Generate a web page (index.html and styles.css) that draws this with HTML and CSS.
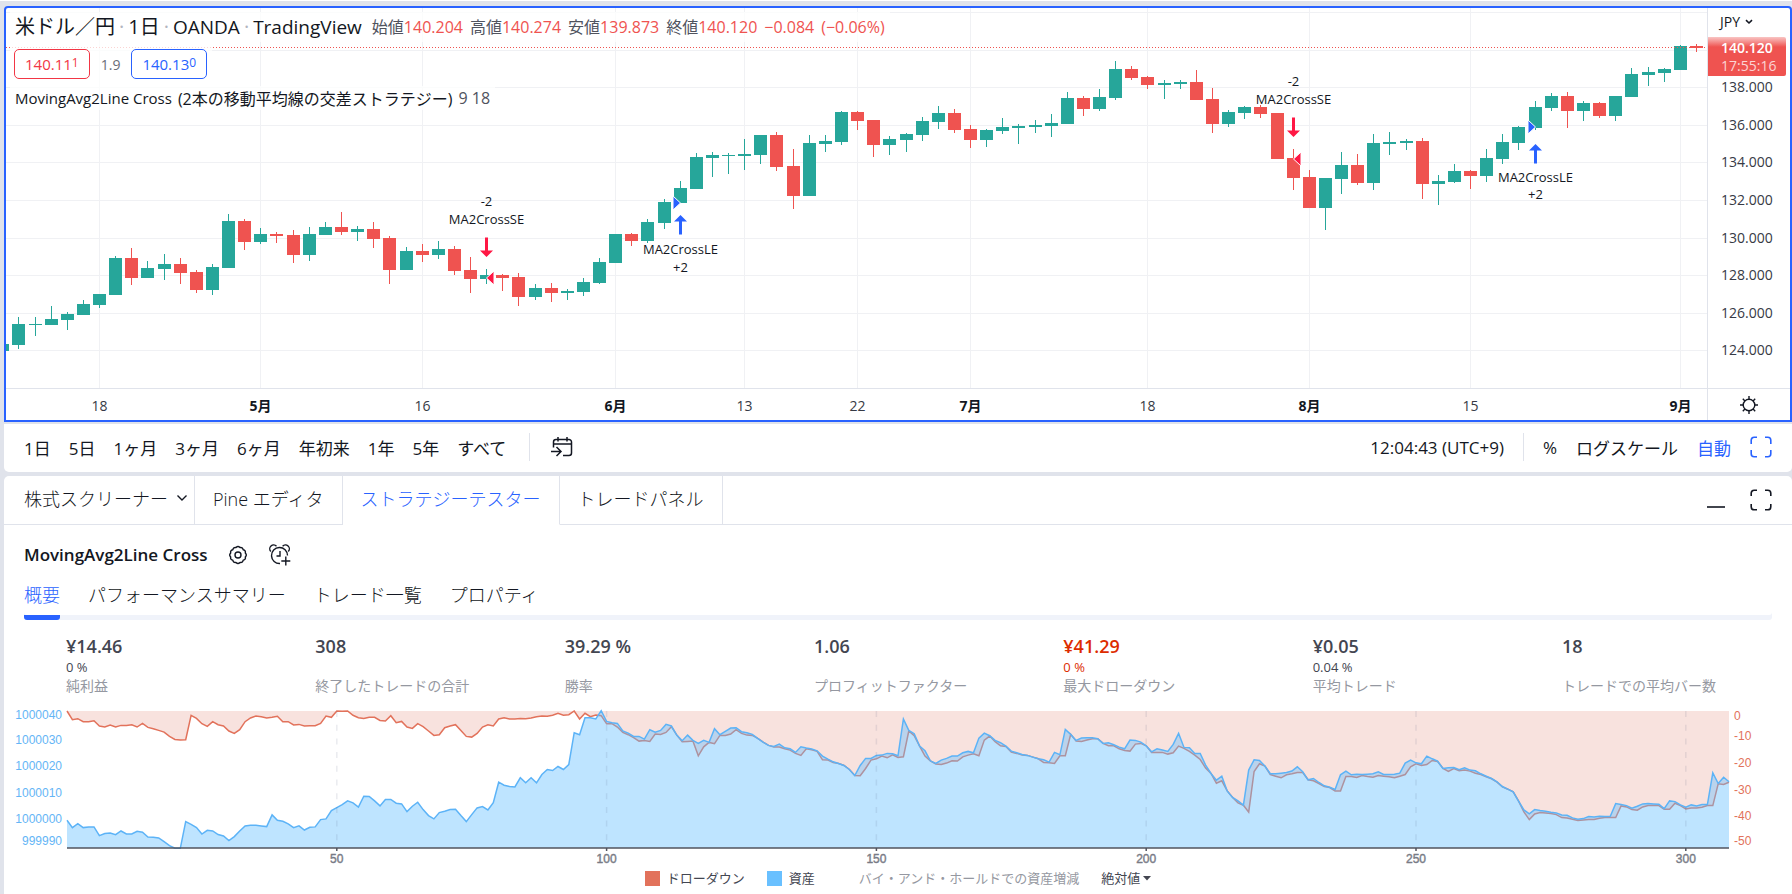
FILE: index.html
```html
<!DOCTYPE html>
<html lang="ja">
<head>
<meta charset="utf-8">
<meta name="viewport" content="width=device-width, initial-scale=1">
<title>米ドル／円 — ストラテジーテスター</title>
<link rel="stylesheet" href="styles.css">
</head>
<body>
<main class="workspace">

  <section class="chart" aria-label="米ドル／円 チャート">
    <div class="plot">
      <svg class="plot-canvas" id="price-plot" role="img" aria-label="ローソク足"></svg>
      <div class="legend">
        <div class="legend-row symbol-row">
          <h1 class="symbol"><span>米ドル／円</span><i>·</i><span>1日</span><i>·</i><span class="latin">OANDA</span><i>·</i><span class="latin">TradingView</span></h1>
          <p class="ohlc"><span>始値<b>140.204</b></span><span>高値<b>140.274</b></span><span>安値<b>139.873</b></span><span>終値<b>140.120</b></span><b>−0.084</b><b>(−0.06%)</b></p>
        </div>
        <div class="legend-row quote-row">
          <button class="quote sell" type="button">140.11<sup>1</sup></button>
          <span class="spread">1.9</span>
          <button class="quote buy" type="button">140.13<sup>0</sup></button>
        </div>
        <div class="legend-row study-row"><span>MovingAvg2Line Cross</span><span class="cjk">(2本の移動平均線の交差ストラテジー)</span><span class="args">9 18</span></div>
      </div>
    </div>
    <div class="price-scale">
      <svg class="plot-canvas" id="price-axis" role="img" aria-label="価格スケール"></svg>
      <button class="currency" type="button">JPY
        <svg width="8" height="6" viewBox="0 0 8 6"><path d="M1 1.2 4 4l3-2.8" fill="none" stroke="currentColor" stroke-width="1.6"/></svg>
      </button>
      <div class="last-price"><strong>140.120</strong><span>17:55:16</span></div>
    </div>
    <div class="time-scale"><svg class="plot-canvas" id="time-axis" role="img" aria-label="時間スケール"></svg></div>
    <button class="scale-settings" type="button" aria-label="スケール設定">
      <svg width="20" height="20" viewBox="0 0 20 20" fill="none" stroke="currentColor" stroke-width="1.4"><circle cx="10" cy="10" r="5.8"/><path d="M10 4.200V1M10 19v-3.200M4.200 10H1M19 10h-3.200M5.900 5.900 3.800 3.800M16.200 16.200l-2.100-2.100M14.100 5.900l2.100-2.100M3.800 16.200l2.100-2.100"/></svg>
    </button>
  </section>

  <section class="range-bar" aria-label="期間">
    <div class="ranges">
      <button type="button">1日</button><button type="button">5日</button><button type="button">1ヶ月</button><button type="button">3ヶ月</button><button type="button">6ヶ月</button><button type="button">年初来</button><button type="button">1年</button><button type="button">5年</button><button type="button">すべて</button>
    </div>
    <span class="divider"></span>
    <button class="goto" type="button" aria-label="日付へ移動">
      <svg width="24" height="24" viewBox="0 0 24 24" fill="none" stroke="currentColor" stroke-width="1.500"><path d="M3.500 12.500V7A2.500 2.500 0 0 1 6 4.500h13A2.500 2.500 0 0 1 21.500 7v11a2.500 2.500 0 0 1-2.500 2.500h-6M3.500 9h18M8 2v4.500M17 2v4.500M1 16.500h9M6.500 12l4.500 4.500L6.500 21"/></svg>
    </button>
    <div class="bar-end">
      <button type="button">12:04:43 (UTC+9)</button>
      <span class="divider"></span>
      <button type="button">%</button>
      <button type="button">ログスケール</button>
      <button class="is-active" type="button">自動</button>
      <button class="is-active icon" type="button" aria-label="全画面">
        <svg width="22" height="22" viewBox="0 0 22 22" fill="none" stroke="currentColor" stroke-width="1.600"><path d="M1.200 8V4.200a3 3 0 0 1 3-3H7M15 1.200h2.800a3 3 0 0 1 3 3V8M20.800 14v3.800a3 3 0 0 1-3 3H15M7 20.800H4.200a3 3 0 0 1-3-3V14"/></svg>
      </button>
    </div>
  </section>

  <section class="tester" aria-label="ストラテジーテスター">
    <nav class="tabs">
      <button class="tab" type="button">株式スクリーナー
        <svg width="12" height="8" viewBox="0 0 12 8"><path d="M1.500 1.500 6 6l4.500-4.500" fill="none" stroke="currentColor" stroke-width="1.400"/></svg>
      </button>
      <button class="tab" type="button">Pine エディタ</button>
      <button class="tab is-active" type="button">ストラテジーテスター</button>
      <button class="tab" type="button">トレードパネル</button>
      <div class="tab-tools">
        <button type="button" aria-label="最小化"><svg width="18" height="22" viewBox="0 0 18 22"><path d="M0 18h18" stroke="currentColor" stroke-width="1.600"/></svg></button>
        <button type="button" aria-label="最大化"><svg width="22" height="22" viewBox="0 0 22 22" fill="none" stroke="currentColor" stroke-width="1.600"><path d="M1.200 7V4.200a3 3 0 0 1 3-3H7M15 1.200h2.800a3 3 0 0 1 3 3V7M20.800 15v2.800a3 3 0 0 1-3 3H15M7 20.800H4.200a3 3 0 0 1-3-3V15"/></svg></button>
      </div>
    </nav>

    <div class="strategy">
      <h2>MovingAvg2Line Cross</h2>
      <button type="button" aria-label="設定">
        <svg width="20" height="20" viewBox="0 0 20 20" fill="none" stroke="currentColor" stroke-width="1.400"><path d="M8 2.600Q10 .6 12 2.600 14.600 2 15.200 4.800 17.900 5.400 17.300 8 19.300 10 17.300 12 17.900 14.600 15.200 15.200 14.600 18 12 17.400 10 19.400 8 17.400 5.400 18 4.800 15.200 2.100 14.600 2.700 12 .7 10 2.700 8 2.100 5.400 4.800 4.800 5.400 2 8 2.600Z" stroke-linejoin="round"/><circle cx="10" cy="10" r="3"/></svg>
      </button>
      <button type="button" aria-label="アラート追加">
        <svg width="24" height="24" viewBox="0 0 24 24" fill="none" stroke="currentColor" stroke-width="1.400"><path d="M19.500 12.500A8 8 0 1 0 12 20.500M12 8v5H8.500M17.800 13.500v9M13.300 18h9"/><path d="M2.800 8.500A3.500 3.500 0 0 1 8.500 3.200M20.300 8.500A3.500 3.500 0 0 0 14.600 3.200"/></svg>
      </button>
    </div>

    <nav class="subtabs">
      <a class="is-active" href="#overview">概要</a><a href="#performance">パフォーマンスサマリー</a><a href="#trades">トレード一覧</a><a href="#properties">プロパティ</a>
    </nav>

    <dl class="metrics" id="overview">
      <div><dd>¥14.46</dd><dd class="sub">0 %</dd><dt>純利益</dt></div>
      <div><dd>308</dd><dd class="sub"></dd><dt>終了したトレードの合計</dt></div>
      <div><dd>39.29 %</dd><dd class="sub"></dd><dt>勝率</dt></div>
      <div><dd>1.06</dd><dd class="sub"></dd><dt>プロフィットファクター</dt></div>
      <div class="loss"><dd>¥41.29</dd><dd class="sub">0 %</dd><dt>最大ドローダウン</dt></div>
      <div><dd>¥0.05</dd><dd class="sub">0.04 %</dd><dt>平均トレード</dt></div>
      <div><dd>18</dd><dd class="sub"></dd><dt>トレードでの平均バー数</dt></div>
    </dl>

    <svg class="equity" id="equity" role="img" aria-label="資産とドローダウン"></svg>

    <div class="series">
      <button class="serie drawdown" type="button">ドローダウン</button>
      <button class="serie capital" type="button">資産</button>
      <button class="serie is-off" type="button">バイ・アンド・ホールドでの資産増減</button>
      <span class="unit">
        <select aria-label="表示単位"><option>絶対値</option></select>
        <svg width="8" height="5" viewBox="0 0 8 5"><path d="M0 0h8L4 4.500Z" fill="currentColor"/></svg>
      </span>
    </div>
  </section>
</main>
<script src="chart.js"></script>
</body>
</html>
```

FILE: styles.css
```css
:root {
  --ink: #131722;
  --blue: #2962ff;
  --red: #ef5350;
  --line: #e0e3eb;
  --ui: "Open Sans", "Noto Sans CJK JP", sans-serif;
}

* { box-sizing: border-box; }

body {
  margin: 0;
  background: var(--line);
  color: var(--ink);
  font-family: var(--ui);
  font-size: 16px;
}

h1, h2, p, dl, dd, dt { margin: 0; }

button {
  padding: 0;
  border: 0;
  background: none;
  color: inherit;
  font: inherit;
  white-space: nowrap;
  cursor: pointer;
}

svg { display: block; flex: none; }

.workspace {
  display: grid;
  grid-template-rows: minmax(300px, 1fr) auto auto;
  height: 100vh;
  padding: 5px 0 0 4px;
  border-top: 1px solid #fff;
}

/* Price chart */

.chart {
  display: grid;
  grid-template: 1fr 32px / minmax(0, 1fr) 83px;
  border: 2px solid var(--blue);
  border-radius: 4px 4px 0 0;
  background: #fff;
  margin-bottom: 2px;
}

.plot, .price-scale, .time-scale { position: relative; overflow: hidden; }

.plot-canvas {
  position: absolute;
  inset: 0;
  width: 100%;
  height: 100%;
}

.price-scale, .scale-settings { border-left: 1px solid var(--line); }
.time-scale, .scale-settings { border-top: 1px solid var(--line); }

.scale-settings { display: grid; place-items: center; }

.legend {
  position: absolute;
  top: 4px;
  left: 4px;
  display: grid;
  justify-items: start;
}

.legend-row {
  display: flex;
  align-items: center;
  padding: 0 5px;
  background: rgb(255 255 255 / 75%);
  white-space: nowrap;
}

.symbol-row { height: 30px; gap: 10px; }

.symbol {
  display: flex;
  gap: 4px;
  font-size: 20px;
  font-weight: 400;
  line-height: 28px;
}

.symbol i { color: #b2b5be; font-style: normal; }
.symbol .latin { font-size: 19px; font-weight: 500; }

.ohlc {
  display: flex;
  gap: 7px;
  color: #50535e;
  font-size: 16px;
  line-height: 28px;
}

.ohlc b { color: var(--red); font-weight: 400; }

.quote-row { height: 44px; gap: 11px; padding-left: 4px; }

.quote {
  height: 30px;
  padding: 0 10px;
  border: 1px solid currentColor;
  border-radius: 5px;
  background: #fff;
  font-size: 15px;
}

.quote sup { font-size: 12px; line-height: 1; vertical-align: 3px; }
.sell { color: #f23645; }
.buy { color: var(--blue); }
.spread { color: #6a6d78; font-size: 14px; }

.study-row { height: 24px; gap: 6px; font-size: 15px; }
.study-row .cjk { font-size: 16px; }
.study-row .args { color: #50535e; font-size: 16px; }

.currency {
  position: absolute;
  top: 4px;
  left: 12px;
  display: flex;
  align-items: center;
  gap: 5px;
  font-size: 14px;
  line-height: 20px;
}

.last-price {
  position: absolute;
  top: 29px;
  left: 0;
  right: 4px;
  display: grid;
  padding: 2px 0 1px 13px;
  border-radius: 0 2px 2px 0;
  background: linear-gradient(#f9c5c4, var(--red) 10px);
  color: #fff;
  font-size: 14px;
  line-height: 18px;
}

.last-price strong { font-weight: 600; }
.last-price span { color: #fbd5d4; }

.axis-text { fill: #363a45; font-size: 14px; }
.axis-text.month { fill: var(--ink); font-weight: 700; }
.order-text { fill: var(--ink); font-size: 13px; text-anchor: middle; }
.grid { stroke: #f0f1f4; }
.last-line { stroke: var(--red); stroke-dasharray: 1 2; }
.up { fill: #26a69a; }
.down { fill: var(--red); }
.long { fill: var(--blue); }
.short { fill: #ff1744; }

/* Range toolbar */

.range-bar {
  display: flex;
  align-items: center;
  height: 48px;
  margin-bottom: 4px;
  padding: 0 20px 2px;
  border-radius: 0 0 5px 5px;
  background: #fff;
  font-size: 17px;
}

.ranges, .bar-end { display: flex; align-items: center; }
.ranges { gap: 18px; }
.bar-end { gap: 19px; margin-left: auto; }
.divider { width: 1px; height: 28px; background: var(--line); }
.ranges + .divider { margin: 0 20px 0 23px; }
.is-active { color: var(--blue); }

/* Strategy tester */

.tester {
  padding-bottom: 4px;
  border-radius: 5px 5px 0 0;
  background: #fff;
}

.tabs { display: flex; height: 49px; }

.tab {
  display: flex;
  align-items: center;
  gap: 8px;
  padding: 0 18px 4px;
  border-right: 1px solid var(--line);
  border-bottom: 1px solid var(--line);
  font-size: 18px;
  font-weight: 300;
}

.tab:first-child { padding: 0 6px 4px 20px; }
.tab.is-active { border-bottom-color: transparent; }

.tab-tools {
  display: flex;
  flex: 1;
  align-items: center;
  justify-content: flex-end;
  gap: 25px;
  padding-right: 20px;
  border-bottom: 1px solid var(--line);
}

.strategy {
  display: flex;
  align-items: center;
  gap: 20px;
  padding: 16px 20px 0;
}

.strategy h2 { font-size: 17px; font-weight: 600; line-height: 28px; }

.subtabs {
  display: flex;
  gap: 28px;
  margin: 11px 20px 0;
  border-radius: 3px;
  box-shadow: inset 0 -5px #f0f3fa;
  font-size: 18px;
  font-weight: 300;
  line-height: 30px;
}

.subtabs a {
  padding-bottom: 10px;
  color: inherit;
  text-decoration: none;
}

.subtabs a.is-active {
  background: linear-gradient(var(--blue), var(--blue)) bottom / 100% 5px no-repeat;
  border-radius: 3px;
  color: var(--blue);
}

.metrics {
  display: grid;
  grid-template-columns: repeat(6, 1fr) auto;
  padding: 14px 76px 2px 62px;
}

.metrics div { display: flex; flex-direction: column; min-width: 0; color: #434651; white-space: nowrap; }
.metrics dd { font-size: 18px; font-weight: 600; line-height: 24px; }
.metrics .sub { height: 18px; font-size: 13px; font-weight: 400; line-height: 18px; }
.metrics dt { color: #9598a1; font-size: 14px; line-height: 20px; }
.metrics .loss dd { color: #dd2c00; }

.equity { width: 100%; height: 168px; }

.equity-text { font-family: "Liberation Sans", Arial, sans-serif; font-size: 12px; }
.equity-text.capital-scale { fill: #64b5f6; text-anchor: end; }
.equity-text.drawdown-scale { fill: #e2725b; }
.equity-text.trade-scale { fill: #787b86; stroke: #787b86; stroke-width: .4; text-anchor: middle; }
.drawdown-area { fill: #f8e2de; }
.drawdown-line { fill: none; stroke: #e2725b; stroke-width: 1.500; }
.capital-area { fill: rgb(100 190 255 / 42%); }
.capital-line { fill: none; stroke: #5cb3f7; stroke-width: 1.500; }
.trade-grid { stroke: rgb(80 90 120 / 12%); stroke-width: 1.500; stroke-dasharray: 6 7.700; }
.baseline { stroke: #50535e; stroke-width: 1.500; }

.series {
  display: flex;
  align-items: center;
  justify-content: center;
  height: 24px;
  gap: 22px;
  font-size: 13px;
  color: #434651;
}

.serie { display: flex; align-items: center; gap: 7px; line-height: 20px; }
.serie::before { width: 15px; height: 15px; background: currentColor; content: ""; }
.drawdown::before { background: #e2725b; }
.capital::before { background: #69c0ff; }
.serie.is-off { padding-left: 22px; color: #9598a1; }
.serie.is-off::before { content: none; }

.unit { display: flex; align-items: center; gap: 2px; }

.unit select {
  appearance: none;
  padding: 0;
  border: 0;
  background: none;
  color: inherit;
  font: inherit;
}
```

FILE: chart.js
```js
const el = (parent, name, attrs, text) => {
  const node = document.createElementNS("http://www.w3.org/2000/svg", name);
  for (const key in attrs) node.setAttribute(key, attrs[key]);
  if (text !== undefined) node.textContent = text;
  parent.append(node);
  return node;
};

/* Daily bars: [bodyTop, bodyBottom, high, low, rising], measured down the scale from PRICE_TOP to PRICE_BOTTOM. */
const PRICE_TOP = 24;
const PRICE_BOTTOM = 1164;
const BAR_STEP = 16.13;
const bars = [
  [1032,1052,1032,1052,1],[972,1035,951,1047,1],[972,975,951,1007,1],[957,975,918,975,1],[941,960,936,990,1],[912,945,900,945,1],
  [882,915,882,924,1],[774,885,768,885,1],[774,834,744,855,0],[804,834,783,834,1],[792,807,762,840,1],[792,819,774,852,0],
  [816,870,810,879,0],[801,870,792,885,1],[663,804,642,804,1],[663,726,657,750,0],[702,726,684,732,1],[702,708,696,729,0],
  [705,765,690,789,0],[702,765,681,783,1],[681,705,666,705,1],[681,696,636,705,0],[687,696,678,723,1],[687,717,666,744,0],
  [714,810,708,852,0],[753,810,741,810,1],[753,765,732,786,0],[747,765,723,777,1],[747,813,738,825,0],[810,837,771,879,0],
  [825,837,807,852,1],[825,834,822,873,0],[831,891,819,918,0],[864,891,852,900,1],[864,879,849,906,0],[873,879,867,900,1],
  [846,876,834,888,1],[786,849,774,852,1],[702,789,702,789,1],[702,723,699,738,0],[666,723,657,729,1],[606,669,597,687,1],
  [564,609,543,609,1],[471,567,459,567,1],[465,474,456,531,1],[465,468,459,522,1],[462,468,417,510,1],[405,465,405,492,1],
  [405,501,396,513,0],[498,588,447,627,0],[429,588,405,588,1],[423,432,405,456,1],[336,426,333,435,1],[336,363,333,390,0],
  [360,435,360,471,0],[417,435,408,465,1],[402,420,399,456,1],[363,405,351,423,1],[339,366,318,387,1],[339,390,327,399,0],
  [387,420,375,444,0],[390,420,387,441,1],[381,393,354,402,1],[378,384,372,432,1],[375,381,360,399,1],[369,378,342,411,1],
  [294,372,276,372,1],[294,327,288,348,0],[291,327,267,333,1],[207,294,183,300,1],[207,234,198,240,0],[231,255,228,267,0],
  [249,255,240,297,1],[246,252,240,267,1],[246,300,210,300,0],[297,372,264,399,0],[336,372,330,381,1],[321,339,318,357,1],
  [321,342,315,354,0],[339,477,339,477,0],[474,534,447,570,0],[531,624,510,624,0],[534,624,534,690,1],[495,537,456,582,1],
  [495,549,462,555,0],[429,549,402,570,1],[426,432,396,465,1],[423,429,417,450,1],[423,552,414,597,0],[543,552,525,615,1],
  [513,546,492,549,1],[513,528,510,567,0],[474,528,447,546,1],[426,477,402,492,1],[381,429,378,450,1],[321,384,303,390,1],
  [288,324,279,333,1],[288,333,276,384,0],[309,333,303,363,1],[309,348,306,354,0],[288,348,288,363,1],[222,291,204,291,1],
  [216,225,201,258,1],[207,219,204,246,1],[138,210,135,210,1],[138,144,132,156,0]
];
const dates = [[6,"18"],[16,"5月"],[26,"16"],[38,"6月"],[46,"13"],[53,"22"],[60,"7月"],[71,"18"],[81,"8月"],[91,"15"],[104,"9月"]];
const prices = [[37],[149],[262,"138.000"],[374,"136.000"],[487,"134.000"],[601,"132.000"],[713,"130.000"],[826,"128.000"],[938,"126.000"],[1051,"124.000"]];
/* Orders: bar, side, fill level, arrow level, text levels. */
const orders = [
  [30,"short",835,714,[["-2",606],["MA2CrossSE",660]]],
  [42,"long",608,645,[["MA2CrossLE",750],["+2",804]]],
  [80,"short",476,354,[["-2",246],["MA2CrossSE",300]]],
  [95,"long",382,432,[["MA2CrossLE",534],["+2",585]]]
];

function drawPrice() {
  const plot = document.getElementById("price-plot");
  const axis = document.getElementById("price-axis");
  const time = document.getElementById("time-axis");
  [plot, axis, time].forEach(node => node.replaceChildren());
  const width = plot.clientWidth;
  const height = plot.clientHeight;
  const x = i => Math.floor(width - 10.6 - BAR_STEP * (bars.length - 1 - i)) + .5;
  const y = v => Math.round((v - PRICE_TOP) / (PRICE_BOTTOM - PRICE_TOP) * height);

  for (const [v, label] of prices) {
    el(plot, "path", { class: "grid", d: `M0 ${y(v) + .5}H${width}` });
    if (label) el(axis, "text", { class: "axis-text", x: 13, y: y(v) + 5 }, label);
  }
  for (const [i, label] of dates) {
    el(plot, "path", { class: "grid", d: `M${x(i)} 0V${height}` });
    el(time, "text", { class: "axis-text" + (label.endsWith("月") ? " month" : ""), x: x(i), y: 22, "text-anchor": "middle" }, label);
  }
  bars.forEach(([top, bottom, high, low, rising], i) => {
    const cls = rising ? "up" : "down";
    el(plot, "rect", { class: cls, x: x(i) - 6.5, y: y(top), width: 13, height: Math.max(1, y(bottom) - y(top)) });
    el(plot, "rect", { class: cls, x: x(i) - .5, y: y(high), width: 1, height: y(low) - y(high) });
  });
  el(plot, "path", { class: "last-line", d: `M0 ${y(142) + .5}H${width}` });

  for (const [i, side, fill, arrow, texts] of orders) {
    const cx = x(i), fy = y(fill), ay = y(arrow);
    const dir = side === "long" ? -1 : 1;
    el(plot, "path", { class: side, stroke: "#fff", d: `M${cx} ${fy}L${cx + dir * 7.5} ${fy - 7}V${fy + 7}Z` });
    const d = side === "long"
      ? `M${cx} ${ay}l6.500 6.500h-5v13h-3v-13h-5Z`
      : `M${cx} ${ay + 19}l6.500-6.500h-5v-13h-3v13h-5Z`;
    el(plot, "path", { class: side, d });
    for (const [text, level] of texts) el(plot, "text", { class: "order-text", x: cx, y: y(level) + 4 }, text);
  }
}

const LEVEL_TOP = 63;
const LEVEL_BOTTOM = 473;
const drawdown = [
  63,89,86,95,95,92,108,111,105,111,106,106,104,111,100,112,116,121,126,139,148,150,149,76,85,101,109,95,104,108,123,130,119,95,84,78,80,84,82,79,
  95,95,105,103,108,107,107,100,78,82,63,64,63,76,83,85,82,82,91,93,77,98,94,111,115,101,110,123,136,134,113,108,104,121,139,141,130,111,104,108,
  87,83,87,87,85,86,84,80,78,79,76,70,76,74,63,87,70,80,75,77,101,101,111,127,134,143,153,151,154,132,133,127,110,135,155,154,153,197,170,157,
  161,136,136,132,119,130,135,136,145,156,166,171,171,176,180,190,196,176,179,184,209,210,217,220,226,238,256,257,235,210,206,198,203,194,202,200,123,137,168,198,
  212,222,223,219,212,213,200,195,191,197,150,138,155,167,169,186,190,195,196,201,206,217,218,220,197,197,133,153,154,150,146,146,160,167,167,176,181,183,162,160,
  167,187,187,187,192,188,168,175,184,195,208,234,250,279,272,302,322,338,345,366,244,221,228,253,258,263,254,251,247,247,269,272,280,289,292,302,302,259,259,262,
  256,259,261,256,258,260,263,258,253,230,221,226,223,211,214,235,244,235,242,240,243,249,253,260,266,276,290,297,305,333,365,388,371,367,368,370,373,382,383,387,
  391,389,388,388,384,382,382,382,347,350,358,360,350,346,346,346,357,357,339,346,356,353,353,351,346,346,281,283,276
];
const capital = [
  390,412,400,412,410,410,436,430,428,433,422,431,431,423,426,440,441,443,454,466,474,474,394,402,412,431,420,422,433,437,451,439,422,407,405,405,407,409,374,390,
  393,401,412,407,419,411,410,388,386,361,352,343,332,338,351,318,319,332,347,328,328,339,341,364,348,336,358,376,386,367,363,358,357,376,394,373,353,349,359,337,
  276,285,289,290,263,278,263,278,253,238,241,229,238,223,128,134,83,83,87,62,94,98,100,123,129,139,139,147,119,126,121,103,108,135,152,135,151,160,151,157,
  116,134,124,114,113,125,128,133,145,156,166,169,162,173,176,187,170,174,177,182,198,207,215,220,226,238,256,226,205,205,196,195,190,191,197,87,121,131,168,182,
  212,220,210,205,198,198,188,184,188,144,129,137,151,158,168,183,188,193,196,201,206,209,216,187,194,118,133,151,144,143,143,146,160,158,164,171,176,150,151,156,
  167,185,176,180,184,163,130,172,173,190,190,225,250,270,258,302,322,332,345,240,209,211,228,251,251,249,247,243,230,245,269,265,277,287,291,298,254,243,254,252,
  253,252,251,245,253,253,252,249,219,210,218,221,198,206,213,235,233,232,239,233,240,242,251,258,265,275,289,297,305,333,359,371,358,361,363,366,368,374,375,383,
  387,385,379,380,378,379,378,340,343,346,354,348,341,340,341,342,355,332,334,344,351,344,347,343,343,248,280,261,275
];
const capitalTicks = [[76,"1000040"],[149,"1000030"],[227,"1000020"],[307,"1000010"],[386,"1000000"],[452,"999990"]];
const drawdownTicks = [[77,"0"],[137,"-10"],[218,"-20"],[298,"-30"],[377,"-40"],[452,"-50"]];

function drawEquity() {
  const svg = document.getElementById("equity");
  svg.replaceChildren();
  const left = 63;
  const right = svg.clientWidth - 63;
  const top = 13;
  const bottom = svg.clientHeight - 18;
  const x = i => (left + (right - left) * i / (capital.length - 1)).toFixed(1);
  const y = v => (top + (v - LEVEL_TOP) / (LEVEL_BOTTOM - LEVEL_TOP) * (bottom - top)).toFixed(1);
  const line = data => "M" + data.map((v, i) => `${x(i)} ${y(v)}`).join("L");

  el(svg, "path", { class: "drawdown-area", d: `${line(drawdown)}V${top}H${left}Z` });
  el(svg, "path", { class: "drawdown-line", d: line(drawdown) });
  el(svg, "path", { class: "capital-area", d: `${line(capital)}V${bottom}H${left}Z` });
  el(svg, "path", { class: "capital-line", d: line(capital) });
  el(svg, "path", { class: "baseline", d: `M${left} ${bottom}H${right}` });
  for (let n = 50; n <= 300; n += 50) {
    el(svg, "path", { class: "trade-grid", d: `M${x(n)} ${top}V${bottom}` });
    el(svg, "path", { class: "baseline", d: `M${x(n)} ${bottom}v3` });
    el(svg, "text", { class: "equity-text trade-scale", x: x(n), y: bottom + 15 }, n);
  }
  for (const [v, label] of capitalTicks) el(svg, "text", { class: "equity-text capital-scale", x: left - 5, y: +y(v) + 4 }, label);
  for (const [v, label] of drawdownTicks) el(svg, "text", { class: "equity-text drawdown-scale", x: right + 5, y: +y(v) + 4 }, label);
}

function draw() {
  drawPrice();
  drawEquity();
}

window.addEventListener("resize", draw);
draw();
```
